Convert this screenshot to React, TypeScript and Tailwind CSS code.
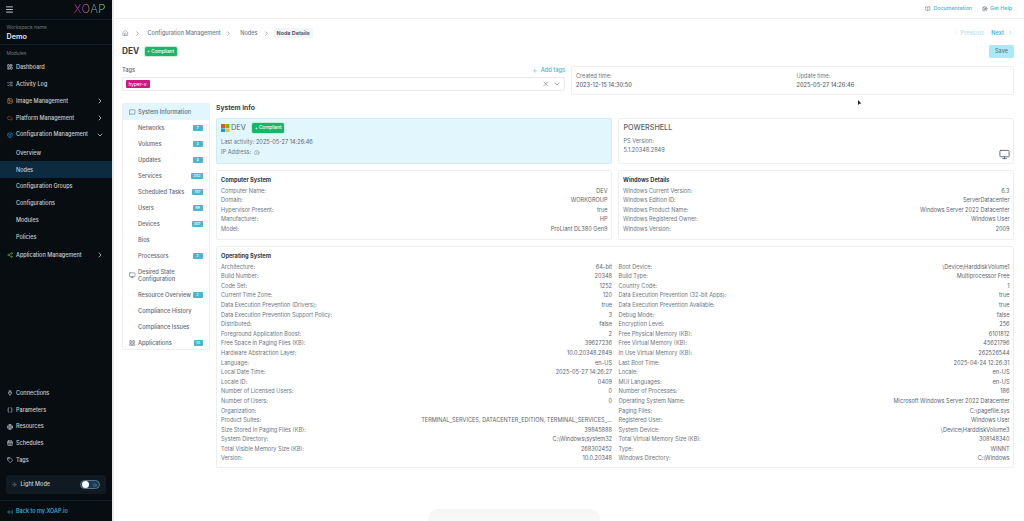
import React from "react";
import { Menu, LayoutDashboard, ListChecks, Image as ImageIcon, Cloud, Box, Share2, ChevronRight, ChevronDown, ChevronLeft, Plug, Braces, Globe, CalendarDays, Tag, Sun, Moon, ArrowLeftFromLine, Home, Plus, X, BookOpen, LifeBuoy, Monitor, LayoutGrid, Info, MessageSquare } from "lucide-react";

function SideItem({ icon, label, chevron, color, active, sub }: any) {
  const I = icon;
  return (
    <div className={`flex items-center h-[16.8px] pr-[8.5px] ${sub ? "pl-[16px]" : "pl-[7px]"} ${active ? "bg-[#0c2a40]" : ""}`}>
      {I && <I className={`w-[6px] h-[6px] mr-[3px] shrink-0 ${color || "text-[#c9ced3]"}`} strokeWidth={2.5} />}
      <span className="text-[5.5px] font-medium text-[#c8cdd2] flex-1 whitespace-nowrap">{label}</span>
      {chevron === "r" && <ChevronRight className="w-[8px] h-[8px] text-[#c8cdd2]" strokeWidth={2.4} />}
      {chevron === "d" && <ChevronDown className="w-[8px] h-[8px] text-[#c8cdd2]" strokeWidth={2.4} />}
    </div>
  );
}

function Sidebar() {
  return (
    <aside className="w-[112px] h-[521px] shrink-0 bg-[#070d11] flex flex-col">
      <div className="h-[19px] flex items-center justify-between pl-[5px] pr-[6px] shrink-0">
        <Menu className="w-[9px] h-[9px] text-[#c8cdd2]" strokeWidth={2.5} />
        <span className="text-[11.5px] font-light tracking-[0.4px] bg-[linear-gradient(90deg,#d81e4a,#7a3cc8_25%,#d4762c_42%,#2a8fc9_68%,#a4d62a)] bg-clip-text text-transparent">XOAP</span>
      </div>
      <div className="h-[26px] border-y border-[#101c24] pl-[6.5px] pt-[4px] shrink-0">
        <div className="text-[4.9px] leading-[7px] text-[#6f7880]">Workspace name</div>
        <div className="text-[7.2px] leading-[12px] font-semibold text-[#e6e9ec]">Demo</div>
      </div>
      <div className="text-[4.9px] text-[#6f7880] pl-[6.5px] pt-[5px] h-[14px] shrink-0">Modules</div>
      <div className="flex flex-col">
        <SideItem icon={LayoutDashboard} label="Dashboard" />
        <SideItem icon={ListChecks} label="Activity Log" />
        <SideItem icon={ImageIcon} label="Image Management" chevron="r" color="text-[#d6891c]" />
        <SideItem icon={Cloud} label="Platform Management" chevron="r" color="text-[#c0392b]" />
        <SideItem icon={Box} label="Configuration Management" chevron="d" color="text-[#1f8fc9]" />
        <div className="h-[1.5px]" />
        <SideItem sub label="Overview" />
        <SideItem sub active label="Nodes" />
        <SideItem sub label="Configuration Groups" />
        <SideItem sub label="Configurations" />
        <SideItem sub label="Modules" />
        <SideItem sub label="Policies" />
        <div className="h-[1.5px]" />
        <SideItem icon={Share2} label="Application Management" chevron="r" color="text-[#3fae49]" />
      </div>
      <div className="mt-auto flex flex-col">
        <SideItem icon={Plug} label="Connections" />
        <SideItem icon={Braces} label="Parameters" />
        <SideItem icon={Globe} label="Resources" />
        <SideItem icon={CalendarDays} label="Schedules" />
        <SideItem icon={Tag} label="Tags" />
        <div className="mx-[6px] mt-[6.5px] h-[19px] bg-[#101a20] rounded-[2px] flex items-center pl-[6px] pr-[6px]">
          <Sun className="w-[5px] h-[5px] text-[#7d868c] mr-[3.5px]" />
          <span className="text-[5.5px] font-medium text-[#c8cdd2] flex-1">Light Mode</span>
          <div className="w-[20px] h-[9px] rounded-full bg-[#143a55] border border-[#5d7385] flex items-center justify-between px-[1px]">
            <div className="w-[6.5px] h-[6.5px] rounded-full bg-white" />
            <Moon className="w-[4px] h-[4px] text-[#9fb4c2] mr-[1px]" />
          </div>
        </div>
        <div className="mt-[6px] h-[21px] border-t border-[#101c24] flex items-center pl-[7px] pt-[1px]">
          <ArrowLeftFromLine className="w-[6px] h-[6px] text-[#45b5d4] mr-[3px]" />
          <span className="text-[5.5px] font-medium text-[#45b5d4]">Back to my.XOAP.io</span>
        </div>
      </div>
    </aside>
  );
}

const navItems: any[] = [
  { label: "Networks", n: "7" }, { label: "Volumes", n: "3" }, { label: "Updates", n: "4" },
  { label: "Services", n: "202" }, { label: "Scheduled Tasks", n: "157" }, { label: "Users", n: "99" },
  { label: "Devices", n: "307" }, { label: "Bios" }, { label: "Processors", n: "2" },
];

function NavRow({ label, n, icon, active, tall }: any) {
  const I = icon;
  return (
    <div className={`flex items-center pl-[6px] pr-[6.5px] ${tall ? "h-[23px]" : "h-[16px]"} ${active ? "bg-[#e2f6fd] rounded-t-[2px]" : ""}`}>
      <span className="w-[9px] shrink-0">{I && <I className="w-[6.5px] h-[6.5px] text-[#56626c]" />}</span>
      <span className="text-[5.7px] leading-[6.6px] font-medium text-[#5f6b75] flex-1">{label}</span>
      {n && <span className={`h-[6.5px] ${n.length > 2 ? "px-[2px]" : n.length > 1 ? "px-[2.5px]" : "w-[10px]"} rounded-[1px] bg-[#4ab6d0] text-white text-[3.8px] leading-[6.5px] text-center font-medium`}>{n}</span>}
    </div>
  );
}

function Row({ k, v }: { k: string; v?: string }) {
  return (
    <div className="flex justify-between h-[9.6px] items-center text-[5.6px] text-[#6b7680] gap-[6px]">
      <span className="whitespace-nowrap">{k}:</span>
      <span className="whitespace-nowrap text-[#5a6570]">{v}</span>
    </div>
  );
}

function Badge() {
  return (
    <span className="inline-flex items-center h-[9.5px] px-[2.5px] rounded-[1.5px] bg-[#17b76a] ring-1 ring-[#c3efd8] text-white text-[4.7px] font-medium whitespace-nowrap">
      <Plus className="w-[3px] h-[3px] mr-[1px]" strokeWidth={3} />Compliant
    </span>
  );
}

const osLeft: [string, string][] = [
  ["Architecture", "64-bit"], ["Build Number", "20348"], ["Code Set", "1252"], ["Current Time Zone", "120"],
  ["Data Execution Prevention (Drivers)", "true"], ["Data Execution Prevention Support Policy", "3"], ["Distributed", "false"],
  ["Foreground Application Boost", "2"], ["Free Space in Paging Files (KB)", "39627236"], ["Hardware Abstraction Layer", "10.0.20348.2849"],
  ["Language", "en-US"], ["Local Date Time", "2025-05-27 14:26:27"], ["Locale ID", "0409"], ["Number of Licensed Users", "0"],
  ["Number of Users", "0"], ["Organization", ""], ["Product Suites", "TERMINAL_SERVICES, DATACENTER_EDITION, TERMINAL_SERVICES_..."],
  ["Size Stored in Paging Files (KB)", "39845888"], ["System Directory", "C:\\Windows\\system32"], ["Total Visible Memory Size (KB)", "268302452"], ["Version", "10.0.20348"],
];
const osRight: [string, string][] = [
  ["Boot Device", "\\Device\\HarddiskVolume1"], ["Build Type", "Multiprocessor Free"], ["Country Code", "1"], ["Data Execution Prevention (32-bit Apps)", "true"],
  ["Data Execution Prevention Available", "true"], ["Debug Mode", "false"], ["Encryption Level", "256"], ["Free Physical Memory (KB)", "6101812"],
  ["Free Virtual Memory (KB)", "45621796"], ["In Use Virtual Memory (KB)", "262526544"], ["Last Boot Time", "2025-04-24 12:26:31"], ["Locale", "en-US"],
  ["MUI Languages", "en-US"], ["Number of Processes", "186"], ["Operating System Name", "Microsoft Windows Server 2022 Datacenter"], ["Paging Files", "C:\\pagefile.sys"],
  ["Registered User", "Windows User"], ["System Device", "\\Device\\HarddiskVolume3"], ["Total Virtual Memory Size (KB)", "308148340"], ["Type", "WINNT"], ["Windows Directory", "C:\\Windows"],
];

function Card({ title, className, children }: any) {
  return (
    <div className={`border border-[#eceef0] rounded-[2px] bg-white pl-[4px] pr-[3.5px] pt-[5px] ${className || ""}`}>
      <div className="text-[5.7px] leading-[8px] font-bold text-[#2f3a44] mb-[2px]">{title}</div>
      {children}
    </div>
  );
}

export default function App() {
  return (
    <div className="relative flex w-[1024px] h-[521px] overflow-hidden bg-white font-['Inter',sans-serif]">
      <Sidebar />
      <main className="flex-1 min-w-0 border-l-2 border-[#e9ebed] flex flex-col">
        <header className="h-[19px] shrink-0 border-b border-[#eef0f1] flex items-center justify-end pr-[12px] gap-[10px] text-[5.3px] text-[#45b5d4] font-medium">
          <span className="flex items-center gap-[2.5px]"><BookOpen className="w-[5.5px] h-[5.5px] text-[#5f6b75]" />Documentation</span>
          <span className="flex items-center gap-[2.5px]"><LifeBuoy className="w-[5.5px] h-[5.5px] text-[#5f6b75]" />Get Help</span>
        </header>
        <div className="flex-1 pl-[8px] pr-[10px] flex flex-col">
          <div className="h-[24px] mt-[2px] flex items-center text-[5.6px] font-medium text-[#707b85]">
            <Home className="w-[6.5px] h-[6.5px] text-[#707b85]" />
            <ChevronRight className="w-[7px] h-[7px] ml-[5.5px] mr-[6.5px] text-[#707b85]" />
            <span>Configuration Management</span>
            <ChevronRight className="w-[7px] h-[7px] ml-[4.5px] mr-[8px] text-[#707b85]" />
            <span>Nodes</span>
            <ChevronRight className="w-[7px] h-[7px] ml-[5.5px] mr-[3.5px] text-[#707b85]" />
            <span className="bg-[#f3f4f6] rounded-[2px] px-[3px] h-[10px] flex items-center text-[#3f4a54] font-semibold text-[5.4px]">Node Details</span>
            <div className="ml-auto flex items-center mr-[1px]">
              <ChevronLeft className="w-[5px] h-[5px] text-[#b5e3ef] mr-[3px]" />
              <span className="text-[#b5e3ef]">Previous</span>
              <span className="text-[#45b5d4] ml-[7.5px] font-semibold">Next</span>
              <ChevronRight className="w-[5px] h-[5px] text-[#45b5d4] ml-[4px]" />
            </div>
          </div>
          <div className="h-[15px] -mt-[1px] flex items-center justify-between">
            <div className="flex items-center gap-[5.5px]">
              <span className="text-[8.3px] font-bold text-[#36414b]">DEV</span>
              <Badge />
            </div>
            <button className="w-[25px] h-[13px] rounded-[1.5px] bg-[#a9e9f9] text-[5.6px] font-medium text-[#6b7680]">Save</button>
          </div>
          <div className="grid grid-cols-2 gap-[6px] mt-[7px]">
            <div>
              <div className="flex justify-between items-center h-[11px] pb-[1.5px] text-[5.7px] font-medium">
                <span className="text-[#5f6b75]">Tags</span>
                <span className="flex items-center gap-[3px] text-[#45b5d4]"><Plus className="w-[5.5px] h-[5.5px]" />Add tags</span>
              </div>
              <div className="h-[14px] border border-[#e8eaec] rounded-[2px] flex items-center pl-[2.5px] pr-[3px] justify-between">
                <span className="h-[8px] px-[3px] rounded-[1px] bg-[#cc1a82] text-white text-[4.9px] leading-[8px]">hyper-v</span>
                <span className="flex items-center gap-[4px] text-[#707b85]"><X className="w-[7.5px] h-[7.5px]" /><ChevronDown className="w-[8px] h-[8px]" /></span>
              </div>
            </div>
            <div className="h-[29px] border border-[#eceef0] rounded-[2px] grid grid-cols-2 pl-[4px] pt-[5px] text-[5.6px] leading-[8.5px] text-[#6b7680]">
              <div>Created time:<div className="font-medium text-[#5a6570]">2023-12-15 14:30:50</div></div>
              <div className="pl-[2px]">Update time:<div className="font-medium text-[#5a6570]">2025-05-27 14:26:46</div></div>
            </div>
          </div>
          <div className="flex gap-[6px] mt-[9px]">
            <nav className="w-[88px] h-[247px] -mt-[1px] shrink-0 border border-[#eceef0] rounded-[2px]">
              <NavRow active icon={MessageSquare} label="System Information" />
              {navItems.map((n) => <NavRow key={n.label} label={n.label} n={n.n} />)}
              <NavRow tall icon={Monitor} label="Desired State Configuration" />
              <NavRow label="Resource Overview" n="2" />
              <NavRow label="Compliance History" />
              <NavRow label="Compliance Issues" />
              <NavRow icon={LayoutGrid} label="Applications" n="13" />
            </nav>
            <section className="flex-1 min-w-0">
              <h2 className="h-[14px] text-[6.7px] leading-[8px] font-bold text-[#36414b]">System Info</h2>
              <div className="grid grid-cols-2 gap-[6px]">
                <div className="h-[46px] bg-[#e2f6fd] border border-[#c9eefa] rounded-[2px] px-[4px] pt-[4px]">
                  <div className="flex items-center h-[10px]">
                    <svg viewBox="0 0 16 16" className="w-[8.5px] h-[8.5px] mr-[1.5px]">
                      <rect x="0" y="0" width="7.6" height="7.6" fill="#f25022" /><rect x="8.4" y="0" width="7.6" height="7.6" fill="#7fba00" />
                      <rect x="0" y="8.4" width="7.6" height="7.6" fill="#00a4ef" /><rect x="8.4" y="8.4" width="7.6" height="7.6" fill="#ffb900" />
                    </svg>
                    <span className="text-[7.4px] text-[#56626c] mr-[6.5px]">DEV</span>
                    <Badge />
                  </div>
                  <div className="mt-[5px] text-[5.6px] leading-[9.6px] text-[#6b7680]">Last activity: <span className="text-[#5a6570]">2025-05-27 14:26:46</span></div>
                  <div className="flex items-center text-[5.6px] leading-[9.6px] text-[#6b7680]">IP Address:<Info className="w-[5.5px] h-[5.5px] ml-[3px]" /></div>
                </div>
                <div className="h-[46px] border border-[#eceef0] rounded-[2px] px-[4.5px] pt-[4px] relative">
                  <div className="text-[7.2px] leading-[10px] font-medium text-[#56626c]">POWERSHELL</div>
                  <div className="mt-[4px] text-[5.6px] leading-[8.5px] text-[#6b7680]">PS Version:</div>
                  <div className="text-[5.6px] leading-[8px] text-[#5a6570]">5.1.20348.2849</div>
                  <Monitor className="absolute right-[3px] bottom-[3.5px] w-[11px] h-[11px] text-[#56626c]" strokeWidth={2} />
                </div>
                <Card title="Computer System" className="h-[70px]">
                  <Row k="Computer Name" v="DEV" />
                  <Row k="Domain" v="WORKGROUP" />
                  <Row k="Hypervisor Present" v="true" />
                  <Row k="Manufacturer" v="HP" />
                  <Row k="Model" v="ProLiant DL380 Gen9" />
                </Card>
                <Card title="Windows Details" className="h-[70px]">
                  <Row k="Windows Current Version" v="6.3" />
                  <Row k="Windows Edition ID" v="ServerDatacenter" />
                  <Row k="Windows Product Name" v="Windows Server 2022 Datacenter" />
                  <Row k="Windows Registered Owner" v="Windows User" />
                  <Row k="Windows Version" v="2009" />
                </Card>
              </div>
              <Card title="Operating System" className="h-[222px] mt-[6px]">
                <div className="grid grid-cols-2 gap-x-[6.5px]">
                  <div>{osLeft.map(([k, v]) => <Row key={k} k={k} v={v} />)}</div>
                  <div>{osRight.map(([k, v]) => <Row key={k} k={k} v={v} />)}</div>
                </div>
              </Card>
            </section>
          </div>
        </div>
      </main>
      <div className="absolute left-[428px] top-[509px] w-[172px] h-[20px] rounded-t-[10px] bg-gradient-to-b from-[#f4f5f5] to-[#fbfbfb]" />
      <svg className="absolute left-[858px] top-[100px] w-[4px] h-[6px]" viewBox="0 0 4 6"><path d="M0 0 L0 5 L1.3 3.8 L3.4 3.4 Z" fill="#222" /></svg>
    </div>
  );
}
